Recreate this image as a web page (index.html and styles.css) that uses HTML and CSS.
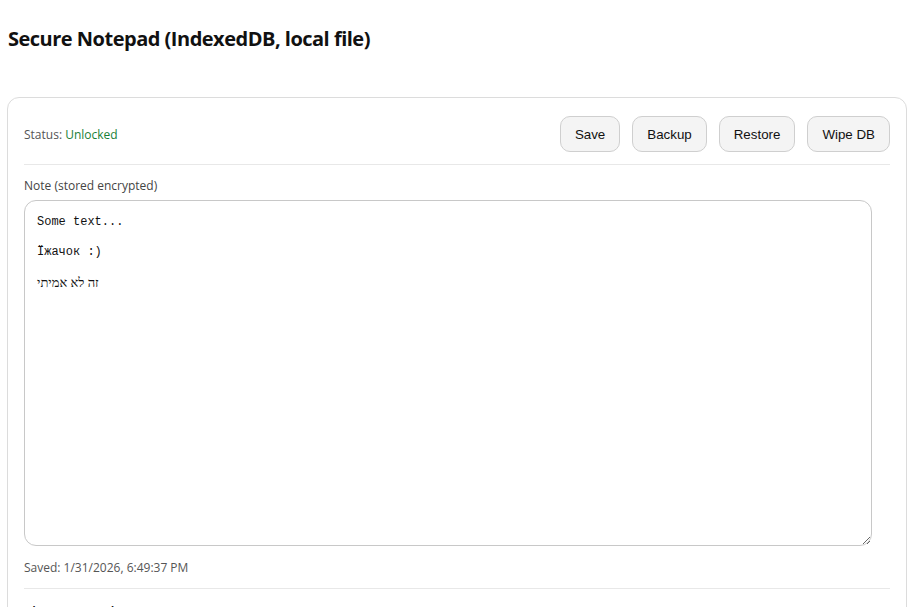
FILE: index.html
```html
<!DOCTYPE html>
<html lang="en">
<head>
<meta charset="utf-8">
<title>Secure Notepad</title>
<link rel="stylesheet" href="styles.css">
</head>
<body>
<main class="app">
  <h1 class="title">Secure Notepad (IndexedDB, local file)</h1>
  <section class="card">
    <div class="toolbar">
      <div class="status">Status: <span class="status-ok">Unlocked</span></div>
      <div class="actions">
        <button class="btn">Save</button>
        <button class="btn">Backup</button>
        <button class="btn">Restore</button>
        <button class="btn">Wipe DB</button>
      </div>
    </div>
    <hr class="divider">
    <div class="label" id="note-label">Note (stored encrypted)</div>
    <div class="note" role="textbox" aria-multiline="true" aria-labelledby="note-label" contenteditable="true" spellcheck="false">
      <div class="line">Some text...</div>
      <div class="line"><br></div>
      <div class="line">Їжачок :)</div>
      <div class="line"><br></div>
      <div class="line"><span class="he" lang="he">זה לא אמיתי</span></div>
    </div>
    <div class="meta">Saved: 1/31/2026, 6:49:37 PM</div>
    <hr class="divider">
    <h2 class="subhead">Change passphrase</h2>
  </section>
</main>
</body>
</html>
```
FILE: styles.css
```css
html, body {
  margin: 0;
  padding: 0;
  background: #fff;
}
body {
  font-family: "Open Sans", "Noto Sans", sans-serif;
  color: #111;
}
.app {
  padding: 0 4px 0 7px;
}
.title {
  margin: 0;
  padding: 25px 0 0 1px;
  font-size: 20px;
  line-height: 27px;
  font-weight: 700;
  letter-spacing: -0.5px;
  color: #111;
}
.card {
  margin-top: 45px;
  width: 900px;
  box-sizing: border-box;
  border: 1px solid #dcdcdc;
  border-radius: 12px;
  padding: 18px 16px 16px;
}
.toolbar {
  display: flex;
  align-items: center;
  justify-content: space-between;
}
.status {
  font-size: 12px;
  color: #555;
}
.status-ok {
  color: #1a7f37;
}
.actions {
  display: flex;
  gap: 12px;
}
.btn {
  font-family: "Liberation Sans", Arial, sans-serif;
  font-size: 13.33px;
  height: 36px;
  padding: 0 14px;
  border: 1px solid #cfcfcf;
  border-radius: 10px;
  background: #f4f4f4;
  color: #111;
}
.divider {
  border: 0;
  border-top: 1px solid #e8e8e8;
  margin: 12px 0 13px;
}
.label {
  font-size: 12px;
  line-height: 16px;
  color: #444;
  margin-bottom: 6px;
}
.note {
  width: 848px;
  height: 346px;
  box-sizing: border-box;
  border: 1px solid #c8c8c8;
  border-radius: 12px;
  padding: 14px 12px 12px;
  font-family: "Liberation Mono", monospace;
  font-size: 12px;
  line-height: 15px;
  color: #111;
  resize: both;
  overflow: auto;
  outline: none;
}
.line {
  height: 15px;
  white-space: pre-wrap;
}
.he {
  font-family: "Liberation Serif", "DejaVu Serif", serif;
  font-size: 13px;
  line-height: 15px;
  vertical-align: 2px;
  unicode-bidi: isolate;
}
.meta {
  margin-top: 14px;
  font-size: 12px;
  line-height: 16px;
  color: #555;
}
.subhead {
  margin: 0;
  font-size: 13px;
  font-weight: 600;
}
```
